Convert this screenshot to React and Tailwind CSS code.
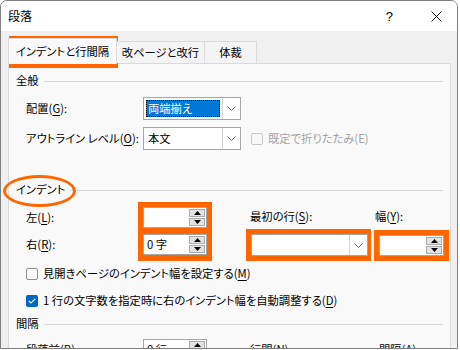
import React from "react";

const FONT = "font-['Noto_Sans_CJK_JP','Noto_Sans',sans-serif] [font-feature-settings:'palt']";

function U({ c }) {
  return <span className="underline underline-offset-[2px] decoration-[1px]">{c}</span>;
}

function Chevron() {
  return (
    <svg width="9" height="5" viewBox="0 0 9 5">
      <path d="M0.5 0.5 L4.5 4.5 L8.5 0.5" fill="none" stroke="#6a6a6a" strokeWidth="1" />
    </svg>
  );
}

function Tri({ up }) {
  return (
    <svg width="7" height="4" viewBox="0 0 7 4">
      {up ? <polygon points="0,4 7,4 3.5,0" fill="#000" /> : <polygon points="0,0 7,0 3.5,4" fill="#000" />}
    </svg>
  );
}

function Spin({ value, className }) {
  return (
    <div className={`flex bg-white border border-[#a6a6a6] ${className}`}>
      <div className="flex-1 flex items-center pl-[3px] leading-none whitespace-nowrap">{value}</div>
      <div className="w-[17px] flex flex-col gap-[1px] py-[1px] pr-[1px]">
        <div className="flex-1 flex items-center justify-center bg-[#e3e3e3] border border-[#acacac]">
          <Tri up />
        </div>
        <div className="flex-1 flex items-center justify-center bg-[#e3e3e3] border border-[#acacac]">
          <Tri />
        </div>
      </div>
    </div>
  );
}

function Dropdown({ children, className }) {
  return (
    <div className={`flex bg-white border border-[#a6a6a6] shrink-0 ${className}`}>
      <div className="flex-1 flex items-center p-[2px]">{children}</div>
      <div className="w-[18px] border-l border-[#d4d4d4] flex items-center justify-center">
        <Chevron />
      </div>
    </div>
  );
}

function Heading({ children }) {
  return (
    <div className="flex items-center h-[20px] gap-[5px]">
      <span className="leading-none whitespace-nowrap">{children}</span>
      <div className="flex-1 h-px bg-[#d7d7d7]" />
    </div>
  );
}

function CheckBox({ checked }) {
  if (checked) {
    return (
      <div className="w-[12px] h-[12px] shrink-0 rounded-[2px] bg-[#0067c0] flex items-center justify-center">
        <svg width="8" height="6" viewBox="0 0 8 6">
          <path d="M0.8 3 L3 5 L7.2 0.8" fill="none" stroke="#fff" strokeWidth="1.1" />
        </svg>
      </div>
    );
  }
  return <div className="w-[12px] h-[12px] shrink-0 rounded-[2px] border border-[#8e8e8e] bg-[#fbfbfb]" />;
}

export default function App() {
  return (
    <div className={`w-[460px] h-[350px] bg-white relative overflow-hidden text-black text-[11.3px] ${FONT}`}>
      <div className="w-[458px] h-[349px] border border-[#808080] rounded-tr-[7px] rounded-tl-[7px] overflow-hidden flex flex-col bg-[#f0f0f0]">
        {/* title bar */}
        <div className="h-[30px] bg-white flex items-center pl-[7px] shrink-0">
          <span className="text-[12px] leading-none">段落</span>
          <div className="flex-1" />
          <span className="text-[13px] leading-none mr-[38px] font-['Liberation_Sans',sans-serif]">?</span>
          <svg width="11" height="11" viewBox="0 0 11 11" className="mr-[15px]">
            <path d="M0.5 0.5 L10.5 10.5 M10.5 0.5 L0.5 10.5" stroke="#111" strokeWidth="1" />
          </svg>
        </div>

        {/* body */}
        <div className="flex-1 flex flex-col pl-[7px] pr-[6px] pt-[10px]">
          {/* tabs */}
          <div className="flex h-[22px] items-end relative z-10">
            <div className="w-[109px] h-[26px] -mb-px bg-[#f9f9f9] border border-b-0 border-[#dadada] flex items-center justify-center leading-none whitespace-nowrap">
              インデントと行間隔
            </div>
            <div className="w-[88px] h-[22px] bg-[#f4f4f4] border border-l-0 border-b-0 border-[#dadada] flex items-center justify-center leading-none whitespace-nowrap">
              改ページと改行
            </div>
            <div className="w-[52px] h-[22px] bg-[#f4f4f4] border border-l-0 border-b-0 border-[#dadada] flex items-center justify-center leading-none">
              体裁
            </div>
          </div>

          {/* panel */}
          <div className="flex-1 bg-[#f9f9f9] border border-[#dadada] pl-[7px] pr-[7px] pt-[7px] leading-none">
            <Heading>全般</Heading>

            <div className="flex items-center mt-[6px] h-[23px]">
              <div className="w-[127px] shrink-0 pl-[10px] whitespace-nowrap">
                配置(<U c="G" />):
              </div>
              <Dropdown className="w-[98px] h-[23px]">
                <div className="h-full w-full bg-[#0078d7] text-white flex items-center pl-[2px] outline-1 outline-dotted outline-[#000] -outline-offset-1">
                  両端揃え
                </div>
              </Dropdown>
            </div>

            <div className="flex items-center mt-[7px] h-[23px]">
              <div className="w-[127px] shrink-0 pl-[10px] whitespace-nowrap">
                アウトライン レベル(<U c="O" />):
              </div>
              <Dropdown className="w-[98px] h-[23px]">
                <div className="pl-[2px]">本文</div>
              </Dropdown>
              <div className="ml-[10px] flex items-center gap-[5px] text-[#a3a3a3] whitespace-nowrap">
                <div className="w-[12px] h-[12px] rounded-[2px] border border-[#c8c8c8]" />
                <span>既定で折りたたみ(E)</span>
              </div>
            </div>

            <div className="mt-[30px]">
              <Heading>インデント</Heading>
            </div>

            <div className="flex mt-[2px]">
              <div className="w-[122px] shrink-0 pl-[10px] pt-[5px] flex flex-col gap-[6px] whitespace-nowrap">
                <div className="h-[21px] flex items-center">
                  左(<U c="L" />):
                </div>
                <div className="h-[21px] flex items-center">
                  右(<U c="R" />):
                </div>
              </div>
              <div className="w-[74px] shrink-0 bg-[#ff6600] p-[5px] flex flex-col gap-[6px]">
                <Spin className="h-[21px]" value="" />
                <Spin className="h-[21px]" value="0 字" />
              </div>
              <div className="ml-[34px] shrink-0 flex flex-col">
                <div className="flex h-[20px] mt-[5px] items-center whitespace-nowrap">
                  <div className="w-[129px] pl-[4px]">
                    最初の行(<U c="S" />):
                  </div>
                  <div>
                    幅(<U c="Y" />):
                  </div>
                </div>
                <div className="flex mt-[2px] gap-[3px]">
                  <div className="w-[125px] h-[32px] bg-[#ff6600] pl-[5px] pr-[3px] py-[5px]">
                    <Dropdown className="w-full h-full">
                      <span />
                    </Dropdown>
                  </div>
                  <div className="w-[75px] h-[31px] bg-[#ff6600] p-[5px] mt-[1px]">
                    <Spin className="w-full h-full" value="" />
                  </div>
                </div>
              </div>
            </div>

            <div className="flex items-center h-[16px] mt-[5px] pl-[10px] gap-[5px] whitespace-nowrap">
              <CheckBox />
              <span>
                見開きページのインデント幅を設定する(<U c="M" />)
              </span>
            </div>
            <div className="flex items-center h-[16px] mt-[11px] pl-[10px] gap-[5px] whitespace-nowrap">
              <CheckBox checked />
              <span>
                1 行の文字数を指定時に右のインデント幅を自動調整する(<U c="D" />)
              </span>
            </div>

            <div className="mt-[5px]">
              <Heading>間隔</Heading>
            </div>

            <div className="flex mt-[5px] h-[22px] items-center whitespace-nowrap">
              <div className="w-[127px] shrink-0 pl-[10px]">
                段落前(<U c="B" />):
              </div>
              <Spin className="w-[64px] h-[22px] shrink-0" value="0 行" />
              <div className="ml-[43px] w-[129px] shrink-0">
                行間(<U c="N" />):
              </div>
              <div>
                間隔(<U c="A" />):
              </div>
            </div>
          </div>
        </div>
      </div>

      {/* annotations */}
      <div className="absolute left-[9px] top-[36px] w-[109px] h-[32px] border-[4px] border-[#ff6600]" />
      <div className="absolute left-[3px] top-[175px] w-[73px] h-[32px] border-[3px] border-[#ff6600] rounded-[50%]" />
    </div>
  );
}
